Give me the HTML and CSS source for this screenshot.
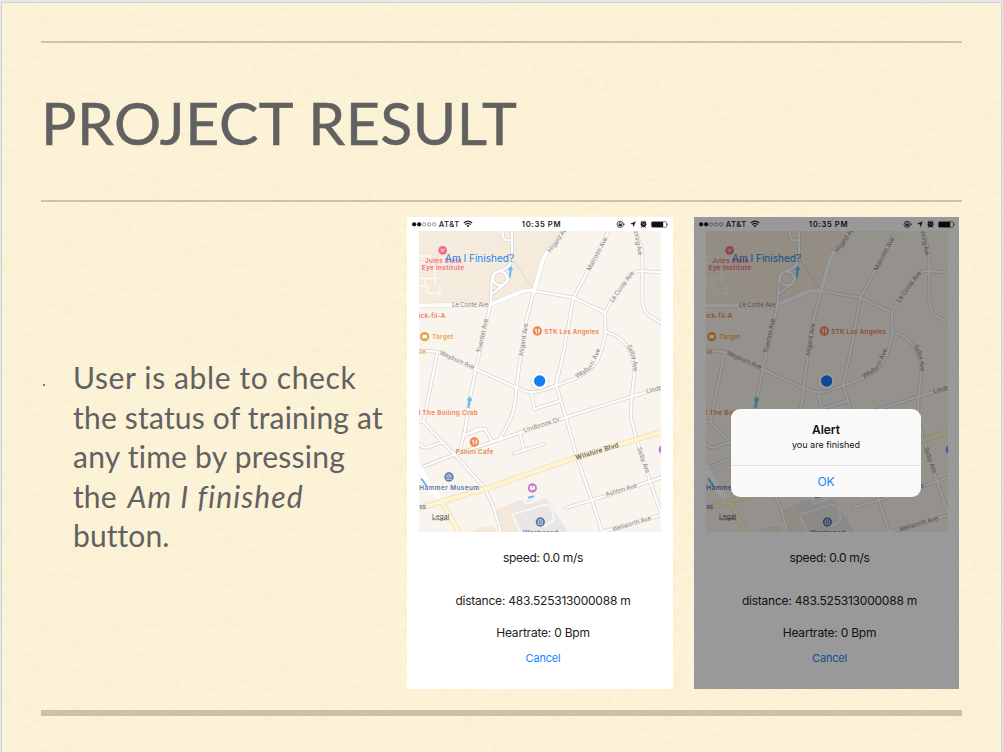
FILE: index.html
```html
<!DOCTYPE html>
<html lang="en">
<head>
<meta charset="utf-8">
<title>Project Result</title>
<link rel="stylesheet" href="styles.css">
</head>
<body>
<main class="slide">
  <svg class="paper" aria-hidden="true">
    <filter id="grain" x="0" y="0" width="100%" height="100%">
      <feTurbulence type="fractalNoise" baseFrequency="0.1 0.2" numOctaves="3" seed="4"/>
      <feColorMatrix values="0 0 0 0 0.62  0 0 0 0 0.54  0 0 0 0 0.3  0.14 0 0 0 -0.04"/>
    </filter>
    <rect width="100%" height="100%" filter="url(#grain)"/>
  </svg>
  <header class="heading"><h1>PROJECT RESULT</h1></header>
  <div class="content">
    <div class="note">
      <span class="bullet"></span>
      <p><span class="l1">User is able to check</span><span class="l2">the status of training at</span><span class="l3">any time by pressing</span><span class="l4">the <em>Am I finished</em></span><span class="l5">button.</span></p>
    </div>
    <section class="phone">
      <div class="screen">
      <svg class="status" viewBox="21 21 797 42">
        <g fill="#111"><circle cx="42" cy="43" r="6.3"/><circle cx="57" cy="43" r="6.3"/></g>
        <g fill="none" stroke="#555" stroke-width="1.8"><circle cx="72" cy="43" r="5"/><circle cx="87" cy="43" r="5"/><circle cx="102" cy="43" r="5"/></g>
        <text x="116" y="51" textLength="61" class="carrier">AT&amp;T</text>
        <g fill="none" stroke="#222" stroke-width="3.6"><path d="M191 39Q203 28 216 39M195 44Q203 36 212 44"/><path d="M199 47Q203 43 208 47L203.500 52Z" fill="#222" stroke="none"/></g>
        <text x="365" y="51" textLength="116" class="clock">10:35 PM</text>
        <g fill="none" stroke="#333" stroke-width="2.4"><circle cx="660" cy="43" r="9.500"/><path d="M657 42v-3q3-5 6 0v3"/></g>
        <path d="M655 42h10v7h-10zM667 41h8l-4 5z" fill="#333"/>
        <path d="M707 34L700 52 698 43 689 42Z" fill="#222"/>
        <circle cx="730" cy="43" r="8.500" fill="#222"/><path d="M722 37l5-4M738 37l-5-4M724 52l-2 2M736 52l2 2" stroke="#222" stroke-width="3"/><path d="M726 40l4 4 4-3" stroke="#fff" stroke-width="1.700" fill="none"/>
        <rect x="754" y="35" width="45" height="17" rx="3" fill="none" stroke="#444" stroke-width="2"/><rect x="755" y="36" width="34" height="15" fill="#111"/><path d="M801 39q5 4 0 9z" fill="#555"/>
      </svg>
      <svg class="map" viewBox="57 63 726 903">
        <path fill="#f9f4ed" d="M57 63h726v903H57z"/>
        <path fill="#f5ebdd" d="M57 63H500L440 125 420 180 402 241 370 243 270 284H57z"/>
        <path fill="#e9e7e5" d="M285 896L345 870 440 867 505 966H300z"/>
        <path fill="#f4e8da" d="M286 895L328 880 362 966H302zM215 966l25-18 40 2 10 16z"/>
        <path d="M340 150L400 240" stroke="#e2dfd2" stroke-width="4"/>
        <g fill="none" stroke="#fdfaf5" stroke-width="4"><path d="M57 138h35v14M57 158h45M57 205h60M105 175v50M57 228h25v22M85 250h35v-24M75 205v22"/></g>
        <defs>
          <g id="streets">
            <path d="M308 63Q307 88 320 91H334M336 60V150Q325 176 300 181 275 188 275 215L272 284M329 160V190Q325 220 300 232L276 252M321 205a21 21 0 1 0-42 0 21 21 0 1 0 42 0"/>
            <path d="M402 243L520 263 615 308 635 270 688 197Q702 183 725 183L783 187M628 60L520 265 490 430 468 525 498 622 530 740 575 868 607 968"/>
            <path d="M704 60Q728 110 727 150V270Q727 300 745 315L785 340M580 290L615 308 617 365Q605 430 590 455 570 485 520 508L468 527Q420 545 395 547 370 543 349 533L225 477 120 428Q100 422 57 423"/>
            <path d="M617 365Q665 380 685 415 705 450 703 490L695 560 693 625 708 680 750 815 784 912"/>
            <path d="M271 284L262 325 228 475 205 590 195 660 180 722M402 243L380 325 362 440 349 535Q345 600 330 630L298 690"/>
            <path d="M785 534L693 560 498 622 360 668 160 735 57 775M395 547L403 597 480 573M112 428L70 635H57M70 635L110 678 165 735 255 835 280 890 303 968"/>
            <path d="M57 702Q70 717 85 712L127 697M190 676L240 659Q252 655 258 662L278 697M215 665L235 656 257 658M360 668L372 722M342 730L432 702M498 893L577 870 690 835 785 802M605 966L785 915"/>
          </g>
          <path id="main-road" d="M508 52L445 121Q427 145 420 180L402 243"/>
          <path id="conte" d="M55 286L270 284 370 243 402 241"/>
        </defs>
        <g fill="none" stroke-linejoin="round" stroke-linecap="round">
          <use href="#streets" stroke="#d9d3ce" stroke-width="11"/>
          <use href="#main-road" stroke="#e0dad5" stroke-width="15"/><use href="#conte" stroke="#e0dad5" stroke-width="14"/>
          <use href="#streets" stroke="#fff" stroke-width="6.5"/>
          <use href="#main-road" stroke="#fff" stroke-width="12"/><use href="#conte" stroke="#fff" stroke-width="11"/>
          <path d="M57 770L82 820 123 872" stroke="#fff" stroke-width="13"/><path d="M57 770L96 843 123 870" stroke="#fff" stroke-width="15"/>
          <path d="M125 872L178 970M55 896L130 873 260 835 520 745 785 666" stroke="#efdcb8" stroke-width="17"/>
          <path d="M125 872L178 970M55 896L130 873 260 835 520 745 785 666" stroke="#fcf5cf" stroke-width="13"/>
          <path d="M287 896L345 871 410 855Q428 858 421 868L382 880Q370 879 374 870L405 861M337 914L430 885Q452 883 456 900L462 927Q450 945 430 948M337 914L360 965M240 948L300 938" stroke="#faf8f5" stroke-width="5"/>
        </g>
        <g fill="none" stroke="#60bfeb" stroke-width="6"><path d="M329 203L332 175M326 179l6-7 5 8M205 594L209 567M203 571l6-7 5 8M64 806L80 828M384 863l19-4"/></g>

        <g class="street-label">
          <text x="156" y="290" textLength="110">Le Conte Ave</text>
          <text transform="translate(451 129) rotate(-53)" textLength="94">Hilgard Ave</text>
          <text transform="translate(571 184) rotate(-62)" textLength="112">Malcolm Ave</text>
          <text transform="translate(697 42) rotate(79)" textLength="97">Manning Ave</text>
          <text transform="translate(638 279) rotate(-54)" textLength="111">Le Conte Ave</text>
          <text transform="translate(242 430) rotate(-78)" textLength="105">Tiverton Ave</text>
          <text transform="translate(369 438) rotate(-81)" textLength="98">Hilgard Ave</text>
          <text transform="translate(118 433) rotate(24)" textLength="112">Weyburn Ave</text>
          <text transform="translate(530 505) rotate(-32)" textLength="53">Weybu</text>
          <text transform="translate(577 473) rotate(-66)" textLength="59">rn Ave</text>
          <text transform="translate(680 407) rotate(66)" textLength="48">Selby</text>
          <text transform="translate(698 453) rotate(86)" textLength="32">Ave</text>
          <text transform="translate(740 550) rotate(-13)" textLength="89">Lindbrook</text>
          <text transform="translate(373 667) rotate(-17)" textLength="112">Lindbrook Dr</text>
          <text transform="translate(711 715) rotate(70)" textLength="80">Selby Ave</text>
          <text transform="translate(619 860) rotate(-17)" textLength="97">Ashton Ave</text>
          <text transform="translate(639 965) rotate(-17)" textLength="121">Wellworth Ave</text>
          <text class="wilshire" transform="translate(529 750) rotate(-17)" textLength="134">Wilshire Blvd</text>
        </g>
        <g class="place">
          <g fill="#ef6c89"><circle cx="128" cy="121" r="13"/><text x="75" y="158" textLength="110">Jules Stein</text><text x="65" y="180" textLength="127">Eye Institute</text></g>
          <path d="M122 118l5 8 8-10M124 117l7 2" fill="none" stroke="#fff" stroke-width="2"/>
          <g fill="#ed8350"><text x="56" y="323" textLength="80">ick-fil-A</text><text x="433" y="371" textLength="164">STK Los Angeles</text><text x="56" y="616" textLength="177">l The Boiling Crab</text><text x="167" y="733" textLength="113">Panini Cafe</text><circle cx="412" cy="363" r="14"/><circle cx="223" cy="696" r="14"/></g>
          <g fill="none" stroke="#fff" stroke-width="2.500"><path d="M405 356v6l4 3v7M409 356v10M416 372v-16q4 2 3 9h-3M217 689v6l4 3v6M221 689v10M228 705v-16q4 2 3 9h-3"/></g>
          <g fill="#e9a743"><circle cx="74" cy="380" r="14"/><text x="96" y="387" textLength="64">Target</text><text x="47" y="432" textLength="30">ole</text></g><rect x="67" y="375" width="14" height="10" rx="2" fill="#fff"/>
          <g fill="#5a75ad"><circle cx="147" cy="801" r="14"/><circle cx="421" cy="936" r="14"/><text x="58" y="839" textLength="179">Hammer Museum</text><text x="369" y="975" textLength="105">Westwood</text></g>
          <g fill="none" stroke="#fff" stroke-width="2"><path d="M139 798l8-6 8 6zM141 800v6M147 800v6M153 800v6M139 808h16M415 943v-12q6-7 12 0v12zM421 931v8"/></g>
          <text x="58" y="896" fill="#4c88cc" textLength="20">ss</text>
          <circle cx="397" cy="834" r="14" fill="#ce7fd0"/><path d="M390 828v11h14v-5h-7v-6zM399 828v6h5v-6z" fill="#fff"/>
          <circle cx="789" cy="719" r="13" fill="#a77bf0"/>
          <text class="legal" x="96" y="926" textLength="51">Legal</text><path d="M96 929h51" stroke="#666" stroke-width="2"/>
        </g>
        <circle cx="419" cy="515" r="28" fill="#887" opacity=".14"/><circle cx="419" cy="513" r="25" fill="#fff"/><circle cx="419" cy="513" r="17" fill="#147df6"/>
        <text class="finished" x="135" y="157" textLength="207">Am I Finished?</text>
      </svg>
      <div class="readings">
        <p class="speed">speed: 0.0 m/s</p>
        <p class="distance">distance: 483.525313000088 m</p>
        <p class="heart">Heartrate: 0 Bpm</p>
        <p class="cancel">Cancel</p>
      </div>
      </div>
    </section>
    <section class="phone dimmed">
      <div class="overlay">
        <div class="alert">
          <div class="message"><h2>Alert</h2><p>you are finished</p></div>
          <div class="ok">OK</div>
        </div>
      </div>
    </section>
  </div>
  <div class="footer-rule"></div>
</main>
<script src="app.js"></script>
</body>
</html>
```
FILE: styles.css
```css
* { box-sizing: border-box; }
body { margin: 0; background: #e6e7e9; overflow: hidden; }
h1, h2, p { margin: 0; font-weight: 400; }
.slide {
  position: relative;
  height: 750px;
  margin: 2px 1px 0;
  padding: 38px 39px 0;
  border: solid #cfd0d0;
  border-width: 1px 1px 0;
  background: #fdf3d8;
  color: #616161;
  font-family: Lato, sans-serif;
  font-variant-ligatures: none;
}
.paper { position: absolute; inset: 0; width: 100%; height: 100%; }
.heading {
  position: relative;
  width: 921px;
  height: 161px;
  border: solid #ccc2ae;
  border-width: 2px 0;
}
h1 {
  padding: 44px 0 0;
  font-size: 59px;
  line-height: 71px;
  letter-spacing: 0.55px;
  white-space: nowrap;
  -webkit-text-stroke: 0.5px #616161;
}
.content { position: relative; display: flex; height: 487px; padding-top: 15px; }
.note { display: flex; width: 366px; padding-top: 141px; }
.bullet { width: 2px; height: 2px; margin: 26px 28px 0 2px; background: #777; }
.note p { font-size: 30px; line-height: 39.5px; }
.note span { display: block; white-space: nowrap; }
.l1 { letter-spacing: 0.63px; }
.l2 { letter-spacing: 0.2px; }
.l3 { letter-spacing: 0.25px; }
.l4 { letter-spacing: 0.1px; }
.l4 em { margin-left: 3px; letter-spacing: 1.1px; }
.l5 { letter-spacing: 0.1px; }
.phone { position: relative; width: 266px; height: 472px; margin-right: 21px; background: #fff; flex: none; }
.dimmed { width: 265px; margin-right: 0; overflow: hidden; }
.screen { width: 266px; height: 472px; font-family: Inter, sans-serif; }
.dimmed .screen { margin-left: -0.5px; }
.status { display: block; width: 266px; height: 14px; }
.map { display: block; width: 242px; height: 301px; margin-left: 12px; }
.carrier { font-size: 23px; font-weight: 500; fill: #222; }
.clock { font-size: 23px; font-weight: 600; fill: #222; }
.street-label { font-size: 19px; fill: #85817f; stroke: #f9f4ed; stroke-width: 3px; paint-order: stroke; }
.street-label .wilshire { font-size: 20px; font-weight: 600; fill: #62605c; stroke: none; }
.place { font-size: 19px; font-weight: 600; }
.place .legal { font-size: 20px; font-weight: 400; fill: #555; }
.finished { font-size: 30px; fill: #2585e8; }
.readings { padding: 17px 0 0 6px; text-align: center; font-size: 12px; line-height: 18px; letter-spacing: -0.22px; color: #222; }
.speed { letter-spacing: -0.3px; }
.distance { margin-top: 25px; }
.heart { margin-top: 14px; }
.readings .cancel { margin-top: 7px; font-size: 11px; color: #1684fc; }
.overlay { position: absolute; inset: 0; display: flex; justify-content: center; align-items: flex-start; padding: 192px 1px 0 0; background: rgba(0, 0, 0, 0.4); font-family: Inter, sans-serif; }
.alert { width: 190px; height: 88px; border-radius: 9px; background: #f9f9f9; text-align: center; color: #111; }
.message { height: 57px; padding-top: 12px; border-bottom: 1px solid #dedede; }
h2 { font-size: 12px; line-height: 17px; font-weight: 600; }
.message p { font-size: 9px; line-height: 14px; }
.ok { font-size: 12px; line-height: 31px; color: #1684fc; }
.footer-rule { position: relative; width: 921px; height: 6px; margin-top: 21px; background: #cac1a9; }
```
FILE: app.js
```js
// The second phone shows the same screen underneath its alert.
const screen1 = document.querySelector('.screen');
document.querySelector('.dimmed').prepend(screen1.cloneNode(true));
```
